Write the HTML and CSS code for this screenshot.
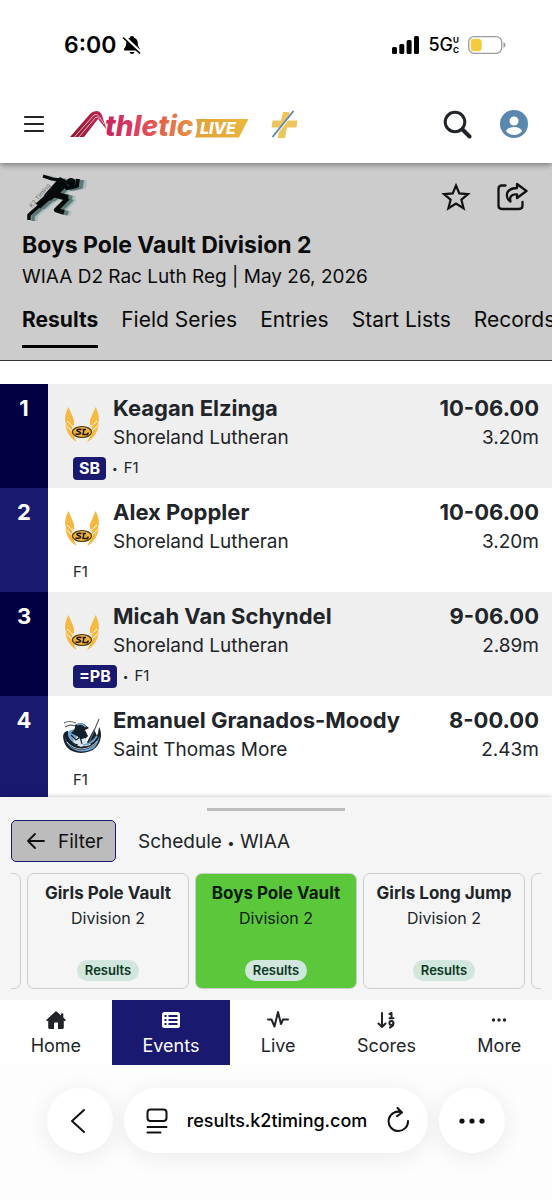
FILE: index.html
```html
<!DOCTYPE html>
<html lang="en">
<head>
<meta charset="utf-8">
<meta name="viewport" content="width=device-width, initial-scale=1">
<title>Boys Pole Vault Division 2</title>
<link rel="stylesheet" href="styles.css">
</head>
<body>
<svg width="0" height="0" class="defs" aria-hidden="true">
  <symbol id="wings" viewBox="0 0 36 38">
    <path fill="#f5b942" d="M4.500 1C1 7 0 14 2.500 19L7 23C10 21 10.500 18 10 14Z"/>
    <path fill="#f5b942" d="M31.500 1C35 7 36 14 33.500 19L29 23C26 21 25.500 18 26 14Z"/>
    <path fill="#f5b942" d="M1.500 18C2 26 6 32 13 36C10 32 9 28 9.500 24ZM34.500 18C34 26 30 32 23 36C26 32 27 28 26.500 24Z"/>
    <path fill="none" stroke="#fff" stroke-width="1" d="M3 15L9.500 21M2.500 20L9 26M33 15L26.500 21M33.500 20L27 26"/>
    <ellipse cx="18" cy="26" rx="9.500" ry="5.500" fill="#f0b437" stroke="#4a3510" stroke-width="1.200"/>
    <path fill="none" stroke="#1c1408" stroke-width="1.500" d="M17.500 23.500C13 22.500 11.500 24.500 14.500 25.500C18.500 27 16.500 29 11.500 28M20 23.500L19 28.500H24M18.500 23.500H22M24 28.500V26.500"/>
  </symbol>
  <symbol id="runner" viewBox="0 0 64 50">
    <path d="M34 4L41 8L40 14L33 21L24 28L18 22L26 13Z" fill="currentColor"/>
    <ellipse cx="45" cy="9" rx="4.500" ry="4" fill="currentColor"/>
    <g fill="none" stroke="currentColor" stroke-linejoin="round">
      <path stroke-width="3" d="M17 3L26 6L36 7"/>
      <path stroke-width="4" d="M36 7L41 15L51 13L52 6"/>
      <path stroke-width="6" d="M27 21L42 25"/>
      <path stroke-width="4.500" d="M42 25L30 37L38 39.500"/>
      <path stroke-width="6.500" d="M23 23L12 33"/>
      <path stroke-width="3.500" d="M13 33L3 42V47"/>
    </g>
  </symbol>
</svg>

<div class="status">
  <div class="status-side">
    <span>6:00</span>
    <svg width="20" height="20" viewBox="0 0 20 20" aria-hidden="true"><path d="M10 1C11.500 1 12 2 12.200 2.700C15 3.500 15.700 6 15.800 8.500C16 11.500 17 12.500 18 14Q18.500 15.500 17 15.500H3Q1.500 15.500 2 14C3 12.500 4 11.500 4.200 8.500C4.300 6 5 3.500 7.800 2.700C8 2 8.500 1 10 1ZM7.500 17H12.500Q12 19 10 19T7.500 17Z"/><path d="M2 1.500L19.500 18" stroke="#fff" stroke-width="3"/><path d="M1 2.500L18 18.500" stroke="#000" stroke-width="1.600"/></svg>
  </div>
  <div class="status-side">
    <svg width="27" height="18" viewBox="0 0 27 18" aria-hidden="true"><rect y="11" width="5" height="7" rx="1.500"/><rect x="7.300" y="8" width="5" height="10" rx="1.500"/><rect x="14.600" y="4" width="5" height="14" rx="1.500"/><rect x="22" width="5" height="18" rx="1.500"/></svg>
    <span class="network">5G<span class="network-sub"><span>U</span><span>C</span></span></span>
    <svg width="38" height="18" viewBox="0 0 38 18" aria-hidden="true"><rect x=".700" y=".700" width="33" height="16.600" rx="5.500" fill="none" stroke="#9b9ba0" stroke-width="1.300"/><rect x="2.700" y="2.700" width="11" height="12.600" rx="3.500" fill="#f4ca3e"/><path d="M35.500 6Q37.500 7 37.500 9T35.500 12Z" fill="#9b9ba0"/></svg>
  </div>
</div>

<header class="topbar">
  <button class="icon-btn" aria-label="Menu"><svg width="20" height="18" viewBox="0 0 20 18"><path d="M1 2H19M1 9H19M1 16H19" stroke="#212529" stroke-width="2.200" stroke-linecap="round"/></svg></button>
  <a class="brand" href="#" aria-label="AthleticLIVE">
    <svg width="182" height="40" viewBox="68 104 182 40">
      <defs>
        <linearGradient id="word" gradientUnits="userSpaceOnUse" x1="104" y1="0" x2="196" y2="0"><stop offset="0" stop-color="#c4245c"/><stop offset=".3" stop-color="#d93a62"/><stop offset=".6" stop-color="#e2604c"/><stop offset="1" stop-color="#e59a3e"/></linearGradient>
        <linearGradient id="leg" x1="0" y1="0" x2="1" y2="0"><stop offset="0" stop-color="#8e1a2c"/><stop offset="1" stop-color="#c4265a"/></linearGradient>
        <linearGradient id="tag" x1="0" y1="0" x2="1" y2="0"><stop offset="0" stop-color="#e2a13c"/><stop offset="1" stop-color="#e8b83e"/></linearGradient>
      </defs>
      <path fill="url(#leg)" d="M70 137L90 114Q94 110 99 111.500Q101.500 113 102.500 117L106.500 129.500L98 119L84 137Z"/>
      <path fill="none" stroke="#fff" stroke-width=".700" d="M74 137.500L94 115Q97 113 99.500 117L104 124M78.500 137.500L95.500 117.500Q97.500 116 99.500 119"/>
      <path fill="url(#tag)" d="M196 119H248.500L239 137.500H195Q199 128 196 119Z"/>
      <text x="105" y="136" class="brand-word" fill="url(#word)">thletic</text>
      <text x="200" y="134" class="brand-live" fill="#fff">LIVE</text>
    </svg>
  </a>
  <a class="plus" href="#" aria-label="Plus"><svg width="30" height="30" viewBox="0 0 30 30"><path fill="#ecc55c" d="M13 3H19.500L18 11.500H27.500L26.500 18.500H17L15 29H8L9.500 18.500H1.500L2.500 11.500H11Z"/><path d="M3.500 28L24 2" stroke="#fff" stroke-width="2.500"/><path d="M2.500 28L23.500 2" stroke="#5a87b0" stroke-width="1.900"/></svg></a>
  <div class="topbar-end">
    <button class="icon-btn" aria-label="Search"><svg width="29" height="29" viewBox="0 0 29 29" fill="none" stroke="#212529"><circle cx="12" cy="12" r="9.800" stroke-width="3"/><path d="M19.500 19.500L26.500 26.500" stroke-width="4" stroke-linecap="round"/></svg></button>
    <button class="icon-btn" aria-label="Account"><svg width="28" height="28" viewBox="0 0 28 28"><circle cx="14" cy="14" r="14" fill="#5a87ae"/><circle cx="14" cy="11" r="4.500" fill="#fff"/><path d="M6 21Q8 17 14 17T22 21Q19 25 14 25T6 21Z" fill="#fff"/></svg></button>
  </div>
</header>

<section class="hero">
  <div class="hero-top">
    <svg width="64" height="50" viewBox="0 0 64 50" role="img" aria-label="K2 Timing">
      <use href="#runner" x="7" y="1" width="64" height="50" color="#a3bdbc"/>
      <use href="#runner" x="4" y="1" width="64" height="50" color="#5f7777"/>
      <use href="#runner" width="64" height="50" color="#050a0a"/>
      <g transform="translate(6 35) rotate(-50)"><text class="sprinter-text" fill="#777">K2 Timing</text></g>
    </svg>
    <div class="hero-actions">
      <button class="icon-btn" aria-label="Favorite"><svg width="30" height="30" viewBox="0 0 30 30"><path fill="none" stroke="#111" stroke-width="2.200" d="M15 3.500L18.300 11.400L27 12.100L20.400 17.700L22.600 26.300L15 21.600L7.400 26.300L9.600 17.700L3 12.100L11.700 11.400Z"/></svg></button>
      <button class="icon-btn" aria-label="Share"><svg width="32" height="30" viewBox="0 0 32 30" fill="none" stroke="#111" stroke-width="2.300" stroke-linejoin="round" stroke-linecap="round"><path d="M9.500 3.500H6Q2.500 3.500 2.500 7V23.500Q2.500 27 6 27H23Q26.500 27 26.500 23.500V20"/><path d="M21 2L30.500 9L21 16V12.500C16 12 13 14.500 14.500 19.500C10 17 7.500 6.500 21 6Z"/></svg></button>
    </div>
  </div>
  <h1>Boys Pole Vault Division 2</h1>
  <p class="meet">WIAA D2 Rac Luth Reg | May 26, 2026</p>
  <nav class="tabs" aria-label="Event views">
    <a class="active" href="#">Results</a><a href="#">Field Series</a><a href="#">Entries</a><a href="#">Start Lists</a><a href="#">Records</a>
  </nav>
</section>

<main class="results">
  <ol>
    <li><span class="rank">1</span><div class="entry"><svg class="team-logo"><use href="#wings"/></svg><strong class="name">Keagan Elzinga</strong><strong class="mark">10-06.00</strong><span class="team">Shoreland Lutheran</span><span class="metric">3.20m</span><div class="tags"><b>SB</b><small>•</small><span>F1</span></div></div></li>
    <li><span class="rank">2</span><div class="entry"><svg class="team-logo"><use href="#wings"/></svg><strong class="name">Alex Poppler</strong><strong class="mark">10-06.00</strong><span class="team">Shoreland Lutheran</span><span class="metric">3.20m</span><div class="tags"><span>F1</span></div></div></li>
    <li><span class="rank">3</span><div class="entry"><svg class="team-logo"><use href="#wings"/></svg><strong class="name">Micah Van Schyndel</strong><strong class="mark">9-06.00</strong><span class="team">Shoreland Lutheran</span><span class="metric">2.89m</span><div class="tags"><b>=PB</b><small>•</small><span>F1</span></div></div></li>
    <li><span class="rank">4</span><div class="entry"><svg class="team-logo" viewBox="0 0 38 38">
      <path fill="#14202c" d="M0 18Q1 34 18 35Q36 34 38 18Q38 12 36 9Q35 21 27 27Q19 30 11 26Q6 22 5 13Q1 13 0 18Z"/>
      <path fill="#6fa6cf" d="M1.500 17Q4 31 18 32Q33 31 36.500 17Q36 25 31 30Q25 34 17 33.500Q3 31 1.500 17ZM5 14Q10 8 15 16L11 25Q4 21 5 14Z"/>
      <path fill="#14202c" d="M12 7Q16 4 21 6L26 10L22 12L25 18L20 23L14 18L8 15Q13 11 12 7ZM23 26L31 11L34 18L29 26Z"/>
      <path fill="#d9e6ef" d="M10 19L16 22L22 20L25 26L18 29L11 26Z"/>
      <path fill="none" stroke="#14202c" stroke-width="1.200" d="M8 17L13 22L17 19L19 26M5 20Q9 26 15 27"/>
      <path fill="none" stroke="#6fa6cf" stroke-width="1.700" d="M14 7Q18 4 23 9M20 27Q28 27 34 18"/>
      <path fill="none" stroke="#fff" stroke-width=".700" d="M4 24Q10 31 19 31Q29 30 34 23"/>
      <path fill="none" stroke="#5a6066" stroke-width="1.200" d="M36 1L26 25M1 5Q6 2 13 5M2 9Q7 6 12 8"/>
    </svg><strong class="name">Emanuel Granados-Moody</strong><strong class="mark">8-00.00</strong><span class="team">Saint Thomas More</span><span class="metric">2.43m</span><div class="tags"><span>F1</span></div></div></li>
  </ol>
</main>

<section class="schedule" aria-label="Schedule">
  <div class="handle"></div>
  <div class="schedule-head">
    <button class="filter"><svg width="18" height="16" viewBox="0 0 18 16" fill="none" stroke="#111" stroke-width="1.800" stroke-linecap="round" stroke-linejoin="round"><path d="M17 8H1M8 1L1 8L8 15"/></svg>Filter</button>
    <span>Schedule <small>•</small> WIAA</span>
  </div>
  <div class="cards">
    <a class="card" href="#" aria-label="Earlier event"></a>
    <a class="card" href="#"><strong>Girls Pole Vault</strong><span>Division 2</span><em>Results</em></a>
    <a class="card current" href="#"><strong>Boys Pole Vault</strong><span>Division 2</span><em>Results</em></a>
    <a class="card" href="#"><strong>Girls Long Jump</strong><span>Division 2</span><em>Results</em></a>
    <a class="card" href="#" aria-label="Later event"></a>
  </div>
</section>

<nav class="bottom-nav" aria-label="Main">
  <a href="#"><svg width="20" height="20" viewBox="0 0 20 20"><path fill="#212529" d="M10 1L15 5.500V3.500H17.300V7.600L20 10.200L18.800 11.300L17.800 10.500V17.500Q17.800 19 16.300 19H12V13Q12 12.500 11.500 12.500H8.500Q8 12.500 8 13V19H3.700Q2.200 19 2.200 17.500V10.500L1.200 11.300L0 10.200Z"/></svg>Home</a>
  <a class="active" href="#"><svg width="20" height="20" viewBox="0 0 20 20"><rect x="1" y="2" width="18" height="16" rx="2.500" fill="#fff"/><path stroke="#191970" stroke-width="2" d="M3.500 6H5.500M7.500 6H16.500M3.500 10H5.500M7.500 10H16.500M3.500 14H5.500M7.500 14H16.500"/></svg>Events</a>
  <a href="#"><svg width="22" height="20" viewBox="0 0 22 20" fill="none" stroke="#212529" stroke-width="2" stroke-linecap="round" stroke-linejoin="round"><path d="M1 9.500H4.500L7.500 16.500L11 2L14 14L16 9.500H21"/></svg>Live</a>
  <a href="#"><svg width="20" height="20" viewBox="0 0 20 20" fill="none" stroke="#212529" stroke-width="2" stroke-linecap="round" stroke-linejoin="round"><path d="M6 3V17M2.500 13.500L6 17L9.500 13.500"/><path d="M13.500 4L15.500 3V8M13.500 8.300H17.500M17.300 13.500Q17.500 16 14 17.500"/><circle cx="15.400" cy="13" r="2"/></svg>Scores</a>
  <a href="#"><svg width="20" height="20" viewBox="0 0 20 20" fill="#212529"><circle cx="4.500" cy="10" r="1.700"/><circle cx="10" cy="10" r="1.700"/><circle cx="15.500" cy="10" r="1.700"/></svg>More</a>
</nav>

<footer class="browser">
  <button class="round" aria-label="Back"><svg width="20" height="26" viewBox="0 0 20 26" fill="none" stroke="#111" stroke-width="2" stroke-linecap="round" stroke-linejoin="round"><path d="M14 2L2 13L14 24"/></svg></button>
  <div class="address">
    <button class="icon-btn" aria-label="Page settings"><svg width="22" height="26" viewBox="0 0 22 26" fill="none" stroke="#111" stroke-width="2" stroke-linecap="round"><rect x="1.500" y="1.500" width="19" height="11.500" rx="3"/><path d="M1.500 19H20.500M1.500 24.500H14.500"/></svg></button>
    <span>results.k2timing.com</span>
    <button class="icon-btn" aria-label="Reload"><svg width="24" height="28" viewBox="0 0 24 28" fill="none" stroke="#111" stroke-width="2" stroke-linecap="round" stroke-linejoin="round"><path d="M22 14A9.700 9.700 0 1 1 15.500 5.200M11.500 1L16 5.500L11 9.200"/></svg></button>
  </div>
  <button class="round" aria-label="More options"><svg width="26" height="8" viewBox="0 0 26 8" fill="#111"><circle cx="3" cy="4" r="2.600"/><circle cx="13" cy="4" r="2.600"/><circle cx="23" cy="4" r="2.600"/></svg></button>
</footer>
</body>
</html>
```
FILE: styles.css
```css
* { box-sizing: border-box; }

body {
  margin: 0;
  height: 100vh;
  display: flex;
  flex-direction: column;
  background: #fff;
  color: #212529;
  font-family: Inter, "Liberation Sans", sans-serif;
  font-size: 18px;
}

a { color: inherit; text-decoration: none; }
button { font: inherit; color: inherit; }
svg { display: block; flex: none; }
.defs { position: absolute; }
.icon-btn { display: flex; padding: 0; border: 0; background: none; }

.status {
  position: relative;
  z-index: 1;
  display: flex;
  justify-content: space-between;
  align-items: center;
  padding: 32px 46px 0 64px;
  background: #fff;
  color: #000;
  font-size: 23px;
  font-weight: 600;
  line-height: 26px;
}
.status-side { display: flex; align-items: center; gap: 6px; }
.status-side:last-child { gap: 9px; }
.network { display: flex; align-items: center; font-size: 18px; font-weight: 500; }
.network-sub { display: grid; font-size: 8px; font-weight: 700; line-height: 10px; }

.topbar {
  position: relative;
  display: flex;
  align-items: center;
  padding: 46px 24px 19px;
  background: #fff;
  box-shadow: 0 2px 6px rgba(0, 0, 0, .4);
}
.status { box-shadow: 0 8px 0 #fff; }
.brand { margin-left: 24px; }
.brand-word { font-size: 28px; font-weight: 800; font-style: italic; }
.brand-live { font-size: 16px; font-weight: 800; font-style: italic; }
.plus { margin-left: 20px; }
.topbar-end { display: flex; align-items: center; gap: 28px; margin-left: auto; }

.hero { background: #ccc; border-bottom: 1px solid #333; color: #0b0b0b; padding-left: 22px; }
.hero-top { display: flex; justify-content: space-between; padding: 10px 24px 0 4px; }
.hero-actions { display: flex; gap: 25px; padding-top: 9px; }
.sprinter-text { font-size: 6px; font-weight: 500; }
h1 { margin: 6px 0 0; font-size: 23px; line-height: 32px; }
.meet { margin: 0; font-size: 19px; line-height: 32px; }
.tabs { display: flex; gap: 23px; overflow: hidden; margin-top: 8px; padding-bottom: 12px; font-size: 21px; line-height: 38px; white-space: nowrap; }
.tabs a { padding-bottom: 6px; border-bottom: 3px solid transparent; }
.tabs .active { font-weight: 700; border-color: #000; }

.results { flex: 1; min-height: 0; overflow: hidden; padding-top: 23px; }
.results ol { list-style: none; margin: 0; padding: 0; }
.results li { display: flex; background: #fff; }
.results li:nth-child(odd) { background: #efefef; }
.rank { flex: 0 0 48px; padding-top: 9px; background: #191970; color: #fff; font-size: 22px; font-weight: 700; line-height: 30px; text-align: center; }
li:nth-child(odd) .rank { background: #020042; }
.entry { flex: 1; display: grid; grid-template-columns: 38px 1fr auto; grid-template-rows: repeat(3, 30px); column-gap: 12px; padding: 9px 13px 5px 15px; line-height: 30px; }
.team-logo { grid-row: 1 / 3; align-self: end; width: 38px; height: 38px; margin-bottom: 9px; }
.name, .mark { font-size: 22px; }
.team, .metric { font-size: 19px; }
.mark, .metric { text-align: right; }
.tags { grid-column: 1 / 4; display: flex; align-items: center; gap: 6px; padding-left: 10px; font-size: 15px; }
.tags small { font-size: 10px; }
.tags b { padding: 0 6px; border-radius: 4px; background: #191970; color: #fff; font-size: 16px; line-height: 23px; }

.schedule { position: relative; padding: 11px; background: #f5f5f5; box-shadow: 0 0 5px rgba(0, 0, 0, .25); }
.handle { width: 138px; height: 3px; margin: 0 auto 9px; background: #bdbdbd; }
.schedule-head { display: flex; align-items: center; gap: 22px; font-size: 19px; }
.schedule-head small { font-size: 13px; }
.filter { display: flex; align-items: center; gap: 13px; height: 42px; padding: 0 12px 0 15px; border: 1px solid #191970; border-radius: 5px; background: #bcbcbc; color: #111; }
.cards { display: flex; justify-content: center; gap: 6px; margin-top: 11px; overflow: hidden; }
.card { flex: 0 0 162px; display: flex; flex-direction: column; align-items: center; height: 116px; padding: 7px 0; border: 1px solid #ccc; border-radius: 7px; font-size: 16px; line-height: 25px; white-space: nowrap; }
.card strong { font-size: 17px; }
.card em { margin-top: auto; padding: 0 8px; border-radius: 11px; background: #d1e7dd; color: #0a3622; font-size: 13px; font-style: normal; font-weight: 600; line-height: 21px; }
.current { background: #5bc83b; color: #0c1a08; }

.bottom-nav { position: relative; display: flex; background: #fff; font-size: 18px; line-height: 24px; }
.bottom-nav a { flex: 1 1 auto; display: flex; flex-direction: column; align-items: center; gap: 4px; padding: 10px 0 7px; }
.bottom-nav .active { background: #191970; color: #fff; }

.browser { display: flex; gap: 11px; padding: 23px 47px 47px; background: #fdfdfd; color: #000; }
.round, .address { height: 65px; border: 0; border-radius: 33px; background: #fff; box-shadow: 0 4px 24px rgba(0, 0, 0, .08); }
.round { flex: 0 0 66px; display: flex; align-items: center; justify-content: center; padding: 0; }
.address { flex: 1; display: flex; align-items: center; justify-content: space-between; padding: 0 18px 0 22px; font-size: 18px; font-weight: 500; }
```
